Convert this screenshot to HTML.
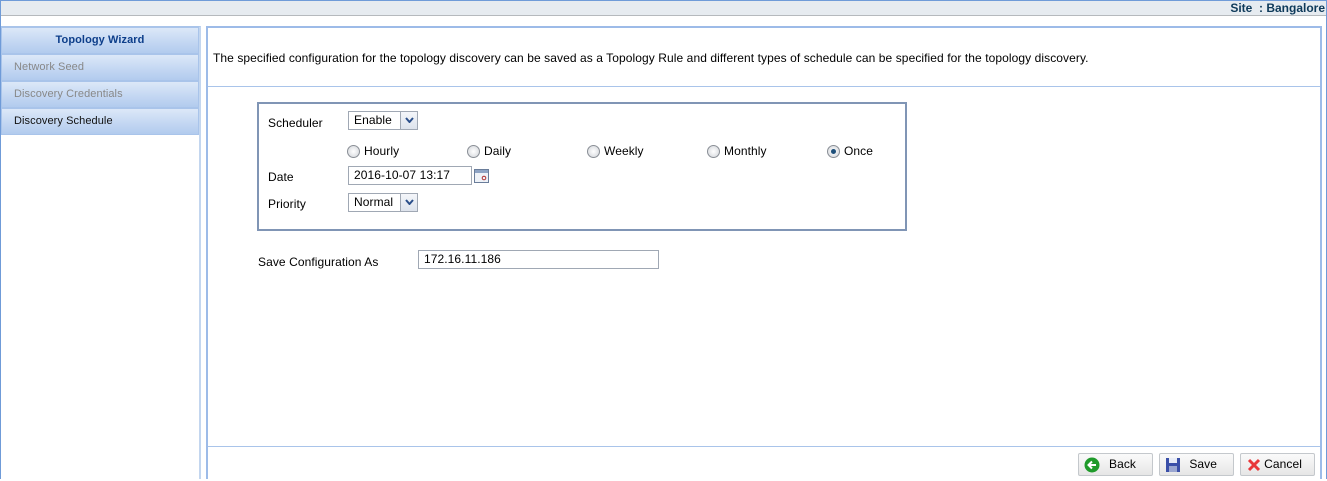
<!DOCTYPE html>
<html><head><style>
*{box-sizing:border-box;margin:0;padding:0}
body{width:1327px;height:479px;overflow:hidden;background:#fff;font-family:"Liberation Sans",sans-serif;font-size:12px;color:#000;position:relative;letter-spacing:0.08px}
.outer{position:absolute;left:0;top:0;width:1327px;height:479px;border:1px solid #6f9bd8;border-bottom:none}
.topbar{position:absolute;left:1px;top:1px;width:1325px;height:15px;background:#e6ebf0;border-bottom:1px solid #b5b9bd;text-align:right;font-weight:bold;color:#0e3a5a;font-size:12px;line-height:15px;padding-right:1px;letter-spacing:0}
.left{position:absolute;left:1px;top:26px;width:200px;height:453px;border-right:2px solid #c3d6ef;border-top:1px solid #a9c4ea}
.item{height:27px;border:1px solid #a9c4ea;background:linear-gradient(#dce8f8,#c2d6f2 60%,#b2cbee);font-size:11px;line-height:24px;padding-left:12px;color:#888}
.item.h{text-align:center;color:#0d3e8a;font-weight:bold;padding-left:0}
.item.a{color:#111}
.right{position:absolute;left:206px;top:26px;width:1116px;height:453px;border:2px solid #9dbbe8;border-bottom:none}
.desc{height:59px;border-bottom:1px solid #a9c4ea;padding:23px 0 0 5px;font-size:12px}
.box{position:absolute;left:49px;top:74px;width:650px;height:129px;border:2px solid #8095b5}
.lbl{position:absolute;font-size:12px}
.sel{position:absolute;height:19px;border:1px solid #a0a8b4;background:#fff;font-size:12px;line-height:16px;padding-left:5px}
.sel i{position:absolute;right:0;top:0;width:17px;height:17px;border-left:1px solid #a0a8b4;background:linear-gradient(#f4f6fa,#dde3ec)}
.sel i svg{position:absolute;left:4px;top:5px}
.rad{position:absolute;font-size:12px;padding-left:17px;line-height:14px}
.rad:before{content:"";position:absolute;left:0;top:1px;width:11px;height:11px;border-radius:50%;border:1px solid #8a8f96;background:radial-gradient(#fff,#d0d3d8)}
.rad.on:after{content:"";position:absolute;left:4px;top:5px;width:5px;height:5px;border-radius:50%;background:#1d4f7a}
.inp{position:absolute;border:1px solid #a0a8b4;height:19px;font-size:12px;line-height:17px;padding-left:5px}
.bottom{position:absolute;left:0;top:418px;width:1112px;border-top:1px solid #a9c4ea;height:35px}
.btn{position:absolute;top:425px;width:75px;height:23px;border:1px solid #c4c8cc;border-radius:2px;background:linear-gradient(#fafafa,#e6e6e6);font-size:12px;line-height:21px;text-align:right}
.btn svg{position:absolute;left:5px;top:3px}
</style></head><body>
<div class="outer"></div>
<div class="topbar">Site&nbsp; : Bangalore</div>
<div class="left">
<div class="item h">Topology Wizard</div>
<div class="item">Network Seed</div>
<div class="item">Discovery Credentials</div>
<div class="item a">Discovery Schedule</div>
</div>
<div class="right">
<div class="desc">The specified configuration for the topology discovery can be saved as a Topology Rule and different types of schedule can be specified for the topology discovery.</div>
<div class="box">
<div class="lbl" style="left:9px;top:12px">Scheduler</div>
<div class="sel" style="left:89px;top:7px;width:70px">Enable<i><svg width="9" height="6"><path d="M1 1L4.5 5L8 1" stroke="#2b4f8a" stroke-width="2" fill="none"/></svg></i></div>
<div class="rad" style="left:88px;top:40px">Hourly</div>
<div class="rad" style="left:208px;top:40px">Daily</div>
<div class="rad" style="left:328px;top:40px">Weekly</div>
<div class="rad" style="left:448px;top:40px">Monthly</div>
<div class="rad on" style="left:568px;top:40px">Once</div>
<div class="lbl" style="left:9px;top:66px">Date</div>
<div class="inp" style="left:89px;top:62px;width:124px">2016-10-07 13:17</div>
<svg style="position:absolute;left:215px;top:65px" width="15" height="14"><rect x="0.5" y="0.5" width="14" height="13" fill="#eef2f8" stroke="#6a7d9a"/><rect x="1" y="1" width="13" height="3" fill="#8da3c4"/><circle cx="10" cy="9" r="1.8" fill="none" stroke="#b03030"/></svg>
<div class="lbl" style="left:9px;top:93px">Priority</div>
<div class="sel" style="left:89px;top:89px;width:70px">Normal<i><svg width="9" height="6"><path d="M1 1L4.5 5L8 1" stroke="#2b4f8a" stroke-width="2" fill="none"/></svg></i></div>
</div>
<div class="lbl" style="left:50px;top:227px">Save Configuration As</div>
<div class="inp" style="left:210px;top:222px;width:241px">172.16.11.186</div>
<div class="bottom"></div>
<div class="btn" style="left:870px;padding-right:16px"><svg width="16" height="16"><circle cx="8" cy="8" r="7.5" fill="#1f9a2a"/><path d="M12 8H5M8 4.5L4.5 8L8 11.5" stroke="#fff" stroke-width="2" fill="none"/></svg>Back</div>
<div class="btn" style="left:951px;padding-right:16px"><svg width="16" height="16"><rect x="1" y="1" width="14" height="14" fill="#3a4fa8"/><rect x="4" y="1" width="8" height="5" fill="#e8ecf6"/><rect x="4" y="9" width="8" height="6" fill="#9aa6d0"/></svg>Save</div>
<div class="btn" style="left:1032px;padding-right:12px"><svg width="16" height="16"><path d="M3 3L13 13M13 3L3 13" stroke="#e8383a" stroke-width="3"/></svg>Cancel</div>
</div>
</body></html>
